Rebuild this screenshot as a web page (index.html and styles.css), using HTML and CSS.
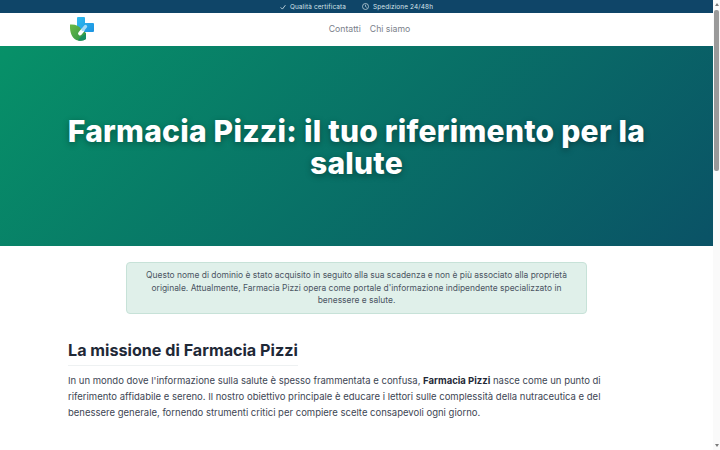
FILE: index.html
```html
<!DOCTYPE html>
<html lang="it">
  <head>
    <meta charset="UTF-8" />
    <title>Farmacia Pizzi</title>
    <link rel="stylesheet" href="styles.css">
  </head>
  <body>
    <div class="page">
      <div class="topbar">
        <span class="topbar-item">
          <svg width="6" height="6" viewBox="0 0 10 10"><path d="M1 5.5 L4 8.5 L9 2" fill="none" stroke="#d5e3ea" stroke-width="1.4"/></svg>
          Qualità certificata
        </span>
        <span class="topbar-item">
          <svg width="7" height="7" viewBox="0 0 10 10"><circle cx="5" cy="5" r="4.3" fill="none" stroke="#d5e3ea" stroke-width="1"/><path d="M5 2.4 V5 L6.8 6.2" fill="none" stroke="#d5e3ea" stroke-width="1"/></svg>
          Spedizione 24/48h
        </span>
      </div>

      <header class="header">
        <div class="logo">
          <svg width="24" height="24" viewBox="0 0 24 24">
            <defs>
              <linearGradient id="crossFill" x1="0" y1="0" x2="1" y2="1">
                <stop offset="0" stop-color="#2fbcef"/>
                <stop offset="1" stop-color="#1a8fe0"/>
              </linearGradient>
              <linearGradient id="leafFill" x1="0" y1="0" x2="1" y2="1">
                <stop offset="0" stop-color="#6cbb45"/>
                <stop offset="1" stop-color="#2a9348"/>
              </linearGradient>
            </defs>
            <path d="M8 0 H14 a1 1 0 0 1 1 1 V6 H23 a1 1 0 0 1 1 1 V14 a1 1 0 0 1 -1 1 H15 V18 H7 V1 a1 1 0 0 1 1 -1 Z" fill="url(#crossFill)"/>
            <path d="M0 7.5 C5 7 9 8.5 11 12 L16 16 L16 22 Q13 24.5 8 23.5 C2 22 -0.5 15 0 7.5 Z" fill="url(#leafFill)"/>
            <path d="M8 23.5 C10 20.5 13 18 16 17 L16 22 Q13 24.5 8 23.5 Z" fill="#178f62"/>
            <path d="M10 16.5 L12.5 13.5" stroke="#ffffff" stroke-width="3.8" stroke-linecap="round"/>
            <path d="M13 12.5 L15.5 9.5" stroke="#a5dcf7" stroke-width="3.4" stroke-linecap="round"/>
          </svg>
        </div>
        <nav class="nav">
          <a href="#">Contatti</a>
          <a href="#">Chi siamo</a>
        </nav>
      </header>

      <section class="hero">
        <h1>Farmacia Pizzi: il tuo riferimento per la salute</h1>
      </section>

      <main class="content">
        <div class="notice">
          Questo nome di dominio è stato acquisito in seguito alla sua scadenza e non è più associato alla proprietà originale. Attualmente, Farmacia Pizzi opera come portale d'informazione indipendente specializzato in benessere e salute.
        </div>

        <h2>La missione di Farmacia Pizzi</h2>
        <p>
          In un mondo dove l'informazione sulla salute è spesso frammentata e confusa, <strong>Farmacia Pizzi</strong> nasce come un punto di riferimento affidabile e sereno. Il nostro obiettivo principale è educare i lettori sulle complessità della nutraceutica e del benessere generale, fornendo strumenti critici per compiere scelte consapevoli ogni giorno.
        </p>
      </main>
    </div>

    <div class="scrollbar">
      <span class="arrow-up"></span>
      <span class="thumb"></span>
      <span class="arrow-down"></span>
    </div>
  </body>
</html>
```

FILE: styles.css
```css
html {
  overflow: hidden;
}
body {
  font-family: "Inter", "Liberation Sans", sans-serif;
  margin: 0;
  height: 450px;
  display: flex;
  background-color: #ffffff;
  color: #2c3645;
}
.page {
  flex: 1;
  min-width: 0;
}
.scrollbar {
  width: 7px;
  display: flex;
  flex-direction: column;
  align-items: center;
  padding: 3px 0;
  box-sizing: border-box;
  background-color: #fafafa;
}
.arrow-up,
.arrow-down {
  width: 0;
  height: 0;
  border-left: 2.5px solid transparent;
  border-right: 2.5px solid transparent;
}
.arrow-up {
  border-bottom: 3px solid #7c7c7c;
}
.arrow-down {
  margin-top: auto;
  border-top: 3px solid #7c7c7c;
}
.thumb {
  width: 5px;
  height: 161px;
  margin-top: 4px;
  border-radius: 2px;
  background-color: #9a9a9a;
}
.topbar {
  background-color: #0f4568;
  color: #d5e3ea;
  height: 13px;
  display: flex;
  justify-content: center;
  align-items: center;
  gap: 16px;
  font-size: 6.4px;
  letter-spacing: 0.15px;
}
.topbar-item {
  display: flex;
  align-items: center;
  gap: 4px;
}
.header {
  height: 33px;
  padding-bottom: 1px;
  box-sizing: border-box;
  background-color: #ffffff;
  display: flex;
  align-items: center;
  padding-left: 70px;
}
.logo {
  display: flex;
  width: 24px;
  height: 24px;
}
.nav {
  flex: 1;
  display: flex;
  justify-content: center;
  gap: 9px;
  padding-right: 68px;
  font-size: 8.7px;
}
.nav a {
  color: #7a808a;
  text-decoration: none;
}
.hero {
  height: 198px;
  padding: 2px 60px 0;
  background: linear-gradient(135deg, #079168, #0a5266);
  display: flex;
  align-items: center;
  justify-content: center;
}
.hero h1 {
  margin: 0;
  color: #ffffff;
  font-size: 30px;
  line-height: 32px;
  font-weight: 800;
  letter-spacing: 0.25px;
  text-align: center;
  text-shadow: 0 2px 6px rgba(0, 0, 0, 0.35);
}
.content {
  width: 577px;
  margin: 0 auto;
  padding: 16px 0 0;
}
.notice {
  width: 435px;
  margin: 0 auto;
  padding: 6px 12px;
  background-color: #e0f0ea;
  border: 1px solid #c7e2d8;
  border-radius: 4px;
  text-align: center;
  font-size: 8.45px;
  line-height: 12.7px;
  color: #4b5563;
}
h2 {
  display: inline-block;
  margin: 26px 0 7px;
  padding-bottom: 5px;
  border-bottom: 1px solid #eef1f2;
  font-size: 16.15px;
  line-height: 20px;
  font-weight: 700;
  color: #1f2937;
}
p {
  margin: 0;
  font-size: 9.5px;
  line-height: 16px;
  color: #3d4654;
}
p strong {
  color: #1f2937;
}
```
